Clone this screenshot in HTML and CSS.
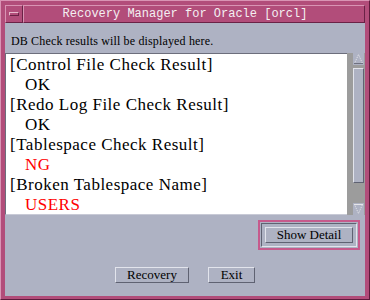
FILE: index.html
```html
<!DOCTYPE html>
<html lang="en">

<head>
    <meta charset="UTF-8">
    <title>Recovery Manager for Oracle [orcl]</title>
    <link rel="stylesheet" href="styles.css">
</head>

<body>
    <div class="window">
        <div class="titlebar">
            <div class="menuBtn"><span></span></div>
            <div class="title">Recovery Manager for Oracle [orcl]</div>
        </div>

        <div class="content">
            <div class="hint">DB Check results will be displayed here.</div>

            <div class="resultBox">
                <div class="output">
                    <div>[Control File Check Result]</div>
                    <div class="value">OK</div>
                    <div>[Redo Log File Check Result]</div>
                    <div class="value">OK</div>
                    <div>[Tablespace Check Result]</div>
                    <div class="value ng">NG</div>
                    <div>[Broken Tablespace Name]</div>
                    <div class="value ng">USERS</div>
                </div>
                <div class="scrollbar">
                    <div class="arrow">
                        <svg width="11" height="12" viewBox="0 0 11 12">
                            <polyline points="1.5,10.5 5.5,1.5 9.5,10.5" fill="none" stroke="#e6e6ea" stroke-dasharray="1 1" />
                            <line x1="1" y1="10.5" x2="10" y2="10.5" stroke="#6e7080" />
                        </svg>
                    </div>
                    <div class="thumb"></div>
                    <div class="arrow down">
                        <svg width="11" height="12" viewBox="0 0 11 12">
                            <line x1="1" y1="1.5" x2="10" y2="1.5" stroke="#e6e6ea" />
                            <polyline points="1.5,1.5 5.5,10.5 9.5,1.5" fill="none" stroke="#e6e6ea" stroke-dasharray="1 1" />
                        </svg>
                    </div>
                </div>
            </div>

            <div class="detailRow">
                <div class="focusRing">
                    <div class="defaultRing">
                        <button type="button" class="btn detail">Show Detail</button>
                    </div>
                </div>
            </div>

            <div class="actions">
                <button type="button" class="btn recovery">Recovery</button>
                <button type="button" class="btn exit">Exit</button>
            </div>
        </div>
    </div>
</body>

</html>
```

FILE: styles.css
```css
* {
    box-sizing: border-box;
}

body {
    margin: 0;
    font-family: "Liberation Serif", serif;
}

.window {
    width: 370px;
    height: 300px;
    background-color: #b24d7a;
    border: 1px solid;
    border-color: #d994b4 #5c1c3c #5c1c3c #d994b4;
    padding: 4px 4px 3px 4px;
    display: flex;
    flex-direction: column;
}

/* title bar */

.titlebar {
    height: 18px;
    display: flex;
}

.menuBtn {
    width: 18px;
    border: 1px solid;
    border-color: #d994b4 #6a2246 #6a2246 #d994b4;
    display: flex;
    align-items: center;
    justify-content: center;
}

.menuBtn span {
    width: 10px;
    height: 4px;
    border: 1px solid;
    border-color: #e8b8cc #6a2246 #6a2246 #e8b8cc;
}

.title {
    flex: 1;
    border: 1px solid;
    border-color: #d994b4 #6a2246 #6a2246 #d994b4;
    color: #f4f0f2;
    font-family: "Liberation Mono", monospace;
    font-size: 12px;
    line-height: 16px;
    text-align: center;
    padding-right: 18px;
}

/* main area */

.content {
    flex: 1;
    background-color: #aeb2c3;
    display: flex;
    flex-direction: column;
}

.hint {
    font-size: 12px;
    letter-spacing: 0.15px;
    line-height: 14px;
    padding: 11px 0 0 6px;
    height: 30px;
    color: #000;
}

.resultBox {
    height: 162px;
    display: flex;
}

.output {
    flex: 1;
    background-color: #fff;
    border-top: 1px solid #6c6e7c;
    border-left: 1px solid #6c6e7c;
    border-bottom: 1px solid #c8cad6;
    padding: 1px 0 0 4px;
    font-size: 17px;
    letter-spacing: 0.5px;
    line-height: 20px;
    color: #000;
    overflow: hidden;
    white-space: nowrap;
}

.output .value {
    padding-left: 15px;
}

.output .ng {
    color: #ff0000;
}

.scrollbar {
    width: 18px;
    background-color: #9c9c9c;
    padding: 0 1px 0 6px;
    display: flex;
    flex-direction: column;
}

.arrow {
    height: 12px;
    background-color: #aeb2c3;
}

.arrow svg {
    display: block;
}

.thumb {
    height: 115px;
    margin-top: 3px;
    background-color: #aeb2c3;
    border: 1px solid;
    border-color: #e2e4ec #5f6272 #5f6272 #e2e4ec;
}

.arrow.down {
    margin-top: auto;
}

/* buttons */

.btn {
    font-family: "Liberation Serif", serif;
    font-size: 13px;
    line-height: 14px;
    height: 16px;
    padding: 0;
    color: #000;
    background-color: #aeb2c3;
    border: 1px solid;
    border-color: #e2e4ec #5f6272 #5f6272 #e2e4ec;
    border-radius: 0;
}

.detailRow {
    display: flex;
    justify-content: flex-end;
    padding: 5px 5px 0 0;
}

.focusRing {
    border: 2px solid #c65a8c;
    padding: 1px;
}

.defaultRing {
    border: 1px solid;
    border-color: #5f6272 #e2e4ec #e2e4ec #5f6272;
    padding: 3px;
}

.detail {
    display: block;
    width: 88px;
}

.actions {
    display: flex;
    justify-content: center;
    gap: 19px;
    margin-top: 17px;
}

.recovery {
    width: 74px;
}

.exit {
    width: 47px;
}
```
